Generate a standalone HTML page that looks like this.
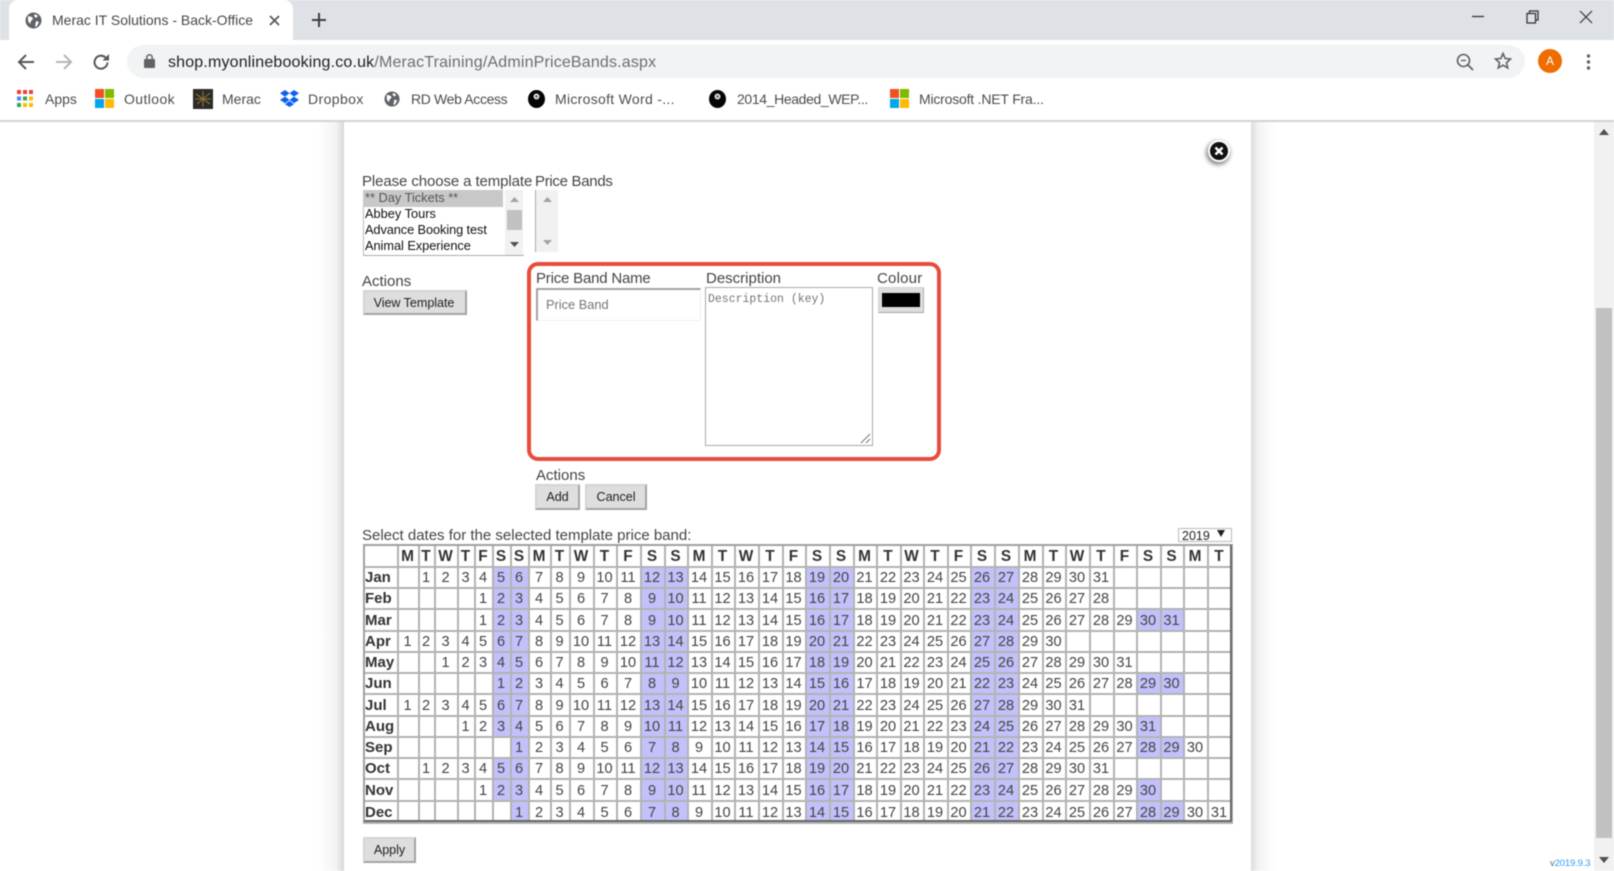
<!DOCTYPE html>
<html><head><meta charset="utf-8"><title>Merac IT Solutions - Back-Office</title>
<style>
html,body{margin:0;padding:0;width:1614px;height:871px;overflow:hidden;background:#fff}
#r{position:absolute;left:0;top:0;width:1614px;height:871px;overflow:hidden;font-family:"Liberation Sans",sans-serif;filter:blur(.45px);background:#fff}
.a{position:absolute;white-space:nowrap}
.bm{position:absolute;top:90px;font-size:14px;line-height:18px;color:#4a4d51;white-space:nowrap}
svg{position:absolute;overflow:visible}
.lab{position:absolute;font-size:15px;line-height:18px;color:#444;white-space:nowrap}
.btn{position:absolute;box-sizing:border-box;background:#dedede;border:2px solid;border-color:#d4d4d4 #a3a3a3 #a3a3a3 #d4d4d4;font-size:12.6px;color:#222;text-align:center;white-space:nowrap;letter-spacing:-.05px}
table{position:absolute;left:363px;top:544px;width:868px;table-layout:fixed;border-collapse:collapse;font-size:14.6px;color:#444;background:#fff}
td,th{padding:1px 2px 0 0;border:2px solid #b3b3b3;text-align:center;overflow:hidden;white-space:nowrap;line-height:16px}
th{color:#333;font-size:15.4px}
th.m{text-align:left;padding-left:0;padding-right:0;font-size:15px}
td.w{background:#c3c1fb}
</style></head><body><div id="r">

<!-- tab strip -->
<div class="a" style="left:0;top:0;width:1614px;height:40px;background:#dee1e6"></div>
<div class="a" style="left:9px;top:0;width:284px;height:40px;background:#fff;border-radius:9px 9px 0 0"></div>
<svg style="left:25px;top:12px" width="17" height="17" viewBox="0 0 17 17"><circle cx="8.5" cy="8.5" r="8" fill="#5f6368"/><path d="M3 4l4 1 1 2-2 2-1 3-2-3zM10 2l3 2-2 2-2-2zM11 9l3 1-2 4-2 1z" fill="#fff"/></svg>
<div class="a" style="left:52px;top:11px;font-size:14px;line-height:18px;color:#45484c">Merac IT Solutions - Back-Office</div>
<svg style="left:269px;top:15px" width="11" height="11" viewBox="0 0 11 11"><path d="M1 1l9 9M10 1l-9 9" stroke="#55585c" stroke-width="1.8"/></svg>
<svg style="left:312px;top:13px" width="14" height="14" viewBox="0 0 14 14"><path d="M7 0v14M0 7h14" stroke="#3c4043" stroke-width="2"/></svg>
<svg style="left:1471px;top:15px" width="14" height="3" viewBox="0 0 14 3"><path d="M1 1.5h12" stroke="#333" stroke-width="1.3"/></svg>
<svg style="left:1526px;top:10px" width="14" height="14" viewBox="0 0 14 14"><path d="M1 3.5h8.5v9.5H1zM3.5 3.5V1H12v9H9.5" fill="none" stroke="#333" stroke-width="1.3"/></svg>
<svg style="left:1579px;top:10px" width="14" height="14" viewBox="0 0 14 14"><path d="M1 1l12 12M13 1L1 13" stroke="#333" stroke-width="1.2"/></svg>

<!-- toolbar -->
<div class="a" style="left:127px;top:45px;width:1398px;height:33px;background:#f1f3f4;border-radius:17px"></div>
<svg style="left:17px;top:53px" width="18" height="18" viewBox="0 0 18 18"><path d="M17 9H2M9 2L2 9l7 7" fill="none" stroke="#55585c" stroke-width="2"/></svg>
<svg style="left:55px;top:53px" width="18" height="18" viewBox="0 0 18 18"><path d="M1 9h15M9 2l7 7-7 7" fill="none" stroke="#b4b6b9" stroke-width="2"/></svg>
<svg style="left:92px;top:53px" width="18" height="18" viewBox="0 0 18 18"><path d="M15.5 9.5A6.5 6.5 0 1 1 13.5 4.5" fill="none" stroke="#55585c" stroke-width="2"/><path d="M10.5 7.5h6.5V1z" fill="#55585c"/></svg>
<svg style="left:144px;top:54px" width="11" height="14" viewBox="0 0 11 14"><rect x="0" y="5" width="11" height="9" rx="1" fill="#5f6368"/><path d="M2.8 5.5V3.5a2.7 2.7 0 0 1 5.4 0v2" fill="none" stroke="#5f6368" stroke-width="1.5"/></svg>
<div class="a" style="left:168px;top:53px;font-size:16px;line-height:20px;color:#202124;letter-spacing:.17px">shop.myonlinebooking.co.uk<span style="color:#6b6f73">/MeracTraining/AdminPriceBands.aspx</span></div>
<svg style="left:1456px;top:53px" width="18" height="18" viewBox="0 0 18 18"><circle cx="7.5" cy="7.5" r="6" fill="none" stroke="#5f6368" stroke-width="1.6"/><path d="M12 12l5 5" stroke="#5f6368" stroke-width="1.8"/><path d="M5 7.5h5" stroke="#5f6368" stroke-width="1.4"/></svg>
<svg style="left:1494px;top:52px" width="18" height="18" viewBox="0 0 18 18"><path d="M9 1.5l2.2 5 5.3.5-4 3.6 1.200 5.300L9 13.200 4.300 15.900l1.200-5.300-4-3.600 5.300-.5z" fill="none" stroke="#5f6368" stroke-width="1.600"/></svg>
<div class="a" style="left:1538px;top:49px;width:24px;height:24px;border-radius:50%;background:#ef6c00;color:#fff;font-size:12px;line-height:24px;text-align:center">A</div>
<svg style="left:1586px;top:54px" width="5" height="16" viewBox="0 0 5 16"><circle cx="2.500" cy="2" r="1.700" fill="#5f6368"/><circle cx="2.500" cy="8" r="1.700" fill="#5f6368"/><circle cx="2.500" cy="14" r="1.700" fill="#5f6368"/></svg>

<!-- bookmarks -->
<svg style="left:17px;top:90px" width="16" height="17" viewBox="0 0 16 17"><g><rect x="0" y="0" width="4" height="4" fill="#ea4335"/><rect x="6" y="0" width="4" height="4" fill="#ea4335"/><rect x="12" y="0" width="4" height="4" fill="#ea4335"/><rect x="0" y="6.500" width="4" height="4" fill="#4d8bf0"/><rect x="6" y="6.500" width="4" height="4" fill="#34a853"/><rect x="12" y="6.500" width="4" height="4" fill="#fbbc05"/><rect x="0" y="13" width="4" height="4" fill="#34a853"/><rect x="6" y="13" width="4" height="4" fill="#fbbc05"/><rect x="12" y="13" width="4" height="4" fill="#fbbc05"/></g></svg>
<div class="bm" style="left:45px">Apps</div>
<svg style="left:95px;top:89px" width="19" height="19" viewBox="0 0 19 19"><rect width="9" height="9" fill="#f25022"/><rect x="10" width="9" height="9" fill="#7fba00"/><rect y="10" width="9" height="9" fill="#00a4ef"/><rect x="10" y="10" width="9" height="9" fill="#ffb900"/></svg>
<div class="bm" style="left:124px;letter-spacing:.4px">Outlook</div>
<svg style="left:193px;top:89px" width="20" height="20" viewBox="0 0 20 20"><rect width="20" height="20" fill="#2b2a28"/><path d="M10 2v16M3 5l14 10M17 4L4 15M2 10h16" stroke="#8c7430" stroke-width="1.100"/></svg>
<div class="bm" style="left:222px">Merac</div>
<svg style="left:280px;top:90px" width="19" height="17" viewBox="0 0 19 17"><path d="M5 0L0 3.300l5 3.300 4.500-3.300zM14 0L9.500 3.300 14 6.600l5-3.300zM0 9.900l5 3.300 4.500-3.300L5 6.600zM14 6.600L9.500 9.900l4.500 3.300 5-3.300zM5 14.200l4.500 2.800 4.500-2.800-4.500-3.300z" fill="#0d62f0"/></svg>
<div class="bm" style="left:308px;letter-spacing:.4px">Dropbox</div>
<svg style="left:384px;top:91px" width="16" height="16" viewBox="0 0 17 17"><circle cx="8.500" cy="8.500" r="8" fill="#5f6368"/><path d="M3 4l4 1 1 2-2 2-1 3-2-3zM10 2l3 2-2 2-2-2zM11 9l3 1-2 4-2 1z" fill="#fff"/></svg>
<div class="bm" style="left:411px;letter-spacing:-.35px">RD Web Access</div>
<svg style="left:528px;top:90px" width="17" height="18" viewBox="0 0 17 18"><ellipse cx="8.500" cy="9" rx="8.500" ry="9" fill="#050505"/><circle cx="8.500" cy="6.500" r="3" fill="#ddd"/><circle cx="8.500" cy="6.500" r="1.200" fill="#6a4a9c"/></svg>
<div class="bm" style="left:555px;letter-spacing:.3px">Microsoft Word -...</div>
<svg style="left:709px;top:90px" width="17" height="18" viewBox="0 0 17 18"><ellipse cx="8.500" cy="9" rx="8.500" ry="9" fill="#050505"/><circle cx="8.500" cy="6.500" r="3" fill="#ddd"/><circle cx="8.500" cy="6.500" r="1.200" fill="#6a4a9c"/></svg>
<div class="bm" style="left:737px;letter-spacing:-.37px">2014_Headed_WEP...</div>
<svg style="left:890px;top:89px" width="19" height="19" viewBox="0 0 19 19"><rect width="9" height="9" fill="#f25022"/><rect x="10" width="9" height="9" fill="#7fba00"/><rect y="10" width="9" height="9" fill="#00a4ef"/><rect x="10" y="10" width="9" height="9" fill="#ffb900"/></svg>
<div class="bm" style="left:919px;letter-spacing:-.2px">Microsoft .NET Fra...</div>
<div class="a" style="left:0;top:120px;width:1614px;height:2px;background:#d2d2d2"></div>

<!-- panel shadows -->
<div class="a" style="left:318px;top:122px;width:26px;height:749px;background:linear-gradient(to right,#fff,#f3f3f3 70%,#d8d8d8)"></div>
<div class="a" style="left:1251px;top:122px;width:24px;height:749px;background:linear-gradient(to right,#dcdcdc,#f3f3f3 30%,#fff)"></div>

<!-- page scrollbar -->
<div class="a" style="left:1594px;top:122px;width:20px;height:749px;background:#f1f1f1"></div>
<div class="a" style="left:1596px;top:308px;width:16px;height:530px;background:#c1c1c1"></div>
<svg style="left:1599px;top:129px" width="10" height="6" viewBox="0 0 10 6"><path d="M5 0l5 6H0z" fill="#505050"/></svg>
<svg style="left:1599px;top:857px" width="10" height="6" viewBox="0 0 10 6"><path d="M5 6l5-6H0z" fill="#505050"/></svg>

<!-- close -->
<div class="a" style="left:1208px;top:140px;width:22px;height:22px;border-radius:50%;background:#fff;box-shadow:-1px 2px 4px 1px rgba(0,0,0,.45)"></div>
<div class="a" style="left:1210px;top:142px;width:18px;height:18px;border-radius:50%;background:#111"></div>
<svg style="left:1214px;top:146px" width="10" height="10" viewBox="0 0 10 10"><path d="M1.500 1.500l7 7M8.500 1.500l-7 7" stroke="#fff" stroke-width="2.500"/></svg>

<!-- template -->
<div class="lab" style="left:362px;top:173px;letter-spacing:-.1px">Please choose a template</div>
<div class="lab" style="left:535px;top:173px;letter-spacing:-.3px">Price Bands</div>
<div class="a" style="left:363px;top:190px;width:160px;height:65px;border-bottom:1.500px solid #aaa;border-left:1px solid #bbb;box-sizing:content-box"></div>
<div class="a" style="left:363px;top:190px;width:140px;height:16.500px;background:#c8c8c8"></div>
<div class="a" style="left:365px;top:190px;font-size:12.800px;line-height:16px;color:#555">** Day Tickets **</div>
<div class="a" style="left:365px;top:206px;font-size:12.800px;line-height:16px;color:#111">Abbey Tours</div>
<div class="a" style="left:365px;top:222px;font-size:12.800px;line-height:16px;color:#111;letter-spacing:-.1px">Advance Booking test</div>
<div class="a" style="left:365px;top:238px;font-size:12.800px;line-height:16px;color:#111;letter-spacing:-.05px">Animal Experience</div>
<div class="a" style="left:505px;top:190px;width:18px;height:65px;background:#f1f1f1"></div>
<div class="a" style="left:507px;top:210px;width:15px;height:20px;background:#c1c1c1"></div>
<svg style="left:510px;top:197px" width="9" height="5" viewBox="0 0 9 5"><path d="M4.500 0l4.500 5H0z" fill="#a3a3a3"/></svg>
<svg style="left:510px;top:242px" width="9" height="5" viewBox="0 0 9 5"><path d="M4.500 5L9 0H0z" fill="#505050"/></svg>

<div class="a" style="left:535px;top:190px;width:23px;height:62px;background:#f1f1f1;border-left:1.500px solid #aaa;box-sizing:border-box"></div>
<svg style="left:543px;top:197px" width="9" height="5" viewBox="0 0 9 5"><path d="M4.500 0l4.500 5H0z" fill="#a3a3a3"/></svg>
<svg style="left:543px;top:240px" width="9" height="5" viewBox="0 0 9 5"><path d="M4.500 5L9 0H0z" fill="#a3a3a3"/></svg>

<div class="lab" style="left:362px;top:273px">Actions</div>
<div class="btn" style="left:363px;top:290px;width:104px;height:25px;line-height:23px;padding-right:2px">View Template</div>

<!-- red box -->
<div class="a" style="left:527px;top:262px;width:414px;height:199px;box-sizing:border-box;border:4px solid #e74c3c;border-radius:11px"></div>
<div class="lab" style="left:536px;top:270px;letter-spacing:-.2px">Price Band Name</div>
<div class="a" style="left:536px;top:288px;width:165px;height:33px;box-sizing:border-box;border:2px solid;border-color:#a3a3a3 #efefef #efefef #a3a3a3;border-bottom-width:1px;border-right-width:1px"></div>
<div class="a" style="left:546px;top:296px;font-size:12.800px;line-height:17px;color:#757575">Price Band</div>
<div class="lab" style="left:706px;top:270px">Description</div>
<div class="a" style="left:705px;top:287px;width:168px;height:159px;box-sizing:border-box;border:1.500px solid #a9a9a9;background:#fff"></div>
<div class="a" style="left:708px;top:292px;font-family:'Liberation Mono',monospace;font-size:11.500px;line-height:15px;color:#757575">Description (key)</div>
<svg style="left:860px;top:433px" width="11" height="11" viewBox="0 0 11 11"><path d="M1 10l9-9M6 10l4-4" stroke="#777" stroke-width="1"/></svg>
<div class="lab" style="left:877px;top:270px;letter-spacing:.2px">Colour</div>
<div class="a" style="left:878px;top:287px;width:46px;height:26px;box-sizing:border-box;background:#dedede;border:1.500px solid;border-color:#d4d4d4 #b0b0b0 #a3a3a3 #d4d4d4"></div>
<div class="a" style="left:882px;top:293px;width:38px;height:14px;background:#000"></div>

<div class="lab" style="left:536px;top:467px">Actions</div>
<div class="btn" style="left:535px;top:484px;width:45px;height:26px;line-height:23px">Add</div>
<div class="btn" style="left:585px;top:484px;width:62px;height:26px;line-height:23px">Cancel</div>

<!-- calendar -->
<div class="lab" style="left:362px;top:527px">Select dates for the selected template price band:</div>
<div class="a" style="left:1178px;top:528px;width:54px;height:14px;box-sizing:border-box;border:1px solid #bbb;background:#fff"></div>
<div class="a" style="left:1182px;top:529px;font-size:12.500px;line-height:15px;color:#222">2019</div>
<svg style="left:1217px;top:530px" width="8" height="7" viewBox="0 0 8 7"><path d="M4 7l4-7H0z" fill="#222"/></svg>

<table>
<colgroup><col style="width:34px"><col style="width:21px"><col style="width:16px"><col style="width:23px"><col style="width:17px"><col style="width:18px"><col style="width:18px"><col style="width:18px"><col style="width:22px"><col style="width:19px"><col style="width:24px"><col style="width:23px"><col style="width:24px"><col style="width:24px"><col style="width:23px"><col style="width:24px"><col style="width:23px"><col style="width:24px"><col style="width:24px"><col style="width:23px"><col style="width:24px"><col style="width:24px"><col style="width:23px"><col style="width:24px"><col style="width:23px"><col style="width:24px"><col style="width:23px"><col style="width:24px"><col style="width:24px"><col style="width:24px"><col style="width:23px"><col style="width:24px"><col style="width:24px"><col style="width:23px"><col style="width:24px"><col style="width:23px"><col style="width:24px"><col style="width:24px"></colgroup>
<tr style="height:22px"><th></th><th>M</th><th>T</th><th>W</th><th>T</th><th>F</th><th>S</th><th>S</th><th>M</th><th>T</th><th>W</th><th>T</th><th>F</th><th>S</th><th>S</th><th>M</th><th>T</th><th>W</th><th>T</th><th>F</th><th>S</th><th>S</th><th>M</th><th>T</th><th>W</th><th>T</th><th>F</th><th>S</th><th>S</th><th>M</th><th>T</th><th>W</th><th>T</th><th>F</th><th>S</th><th>S</th><th>M</th><th>T</th></tr>
<tr style="height:21px"><th class="m">Jan</th><td></td><td>1</td><td>2</td><td>3</td><td>4</td><td class="w">5</td><td class="w">6</td><td>7</td><td>8</td><td>9</td><td>10</td><td>11</td><td class="w">12</td><td class="w">13</td><td>14</td><td>15</td><td>16</td><td>17</td><td>18</td><td class="w">19</td><td class="w">20</td><td>21</td><td>22</td><td>23</td><td>24</td><td>25</td><td class="w">26</td><td class="w">27</td><td>28</td><td>29</td><td>30</td><td>31</td><td></td><td></td><td></td><td></td><td></td></tr>
<tr style="height:21px"><th class="m">Feb</th><td></td><td></td><td></td><td></td><td>1</td><td class="w">2</td><td class="w">3</td><td>4</td><td>5</td><td>6</td><td>7</td><td>8</td><td class="w">9</td><td class="w">10</td><td>11</td><td>12</td><td>13</td><td>14</td><td>15</td><td class="w">16</td><td class="w">17</td><td>18</td><td>19</td><td>20</td><td>21</td><td>22</td><td class="w">23</td><td class="w">24</td><td>25</td><td>26</td><td>27</td><td>28</td><td></td><td></td><td></td><td></td><td></td></tr>
<tr style="height:22px"><th class="m">Mar</th><td></td><td></td><td></td><td></td><td>1</td><td class="w">2</td><td class="w">3</td><td>4</td><td>5</td><td>6</td><td>7</td><td>8</td><td class="w">9</td><td class="w">10</td><td>11</td><td>12</td><td>13</td><td>14</td><td>15</td><td class="w">16</td><td class="w">17</td><td>18</td><td>19</td><td>20</td><td>21</td><td>22</td><td class="w">23</td><td class="w">24</td><td>25</td><td>26</td><td>27</td><td>28</td><td>29</td><td class="w">30</td><td class="w">31</td><td></td><td></td></tr>
<tr style="height:21px"><th class="m">Apr</th><td>1</td><td>2</td><td>3</td><td>4</td><td>5</td><td class="w">6</td><td class="w">7</td><td>8</td><td>9</td><td>10</td><td>11</td><td>12</td><td class="w">13</td><td class="w">14</td><td>15</td><td>16</td><td>17</td><td>18</td><td>19</td><td class="w">20</td><td class="w">21</td><td>22</td><td>23</td><td>24</td><td>25</td><td>26</td><td class="w">27</td><td class="w">28</td><td>29</td><td>30</td><td></td><td></td><td></td><td></td><td></td><td></td><td></td></tr>
<tr style="height:21px"><th class="m">May</th><td></td><td></td><td>1</td><td>2</td><td>3</td><td class="w">4</td><td class="w">5</td><td>6</td><td>7</td><td>8</td><td>9</td><td>10</td><td class="w">11</td><td class="w">12</td><td>13</td><td>14</td><td>15</td><td>16</td><td>17</td><td class="w">18</td><td class="w">19</td><td>20</td><td>21</td><td>22</td><td>23</td><td>24</td><td class="w">25</td><td class="w">26</td><td>27</td><td>28</td><td>29</td><td>30</td><td>31</td><td></td><td></td><td></td><td></td></tr>
<tr style="height:21px"><th class="m">Jun</th><td></td><td></td><td></td><td></td><td></td><td class="w">1</td><td class="w">2</td><td>3</td><td>4</td><td>5</td><td>6</td><td>7</td><td class="w">8</td><td class="w">9</td><td>10</td><td>11</td><td>12</td><td>13</td><td>14</td><td class="w">15</td><td class="w">16</td><td>17</td><td>18</td><td>19</td><td>20</td><td>21</td><td class="w">22</td><td class="w">23</td><td>24</td><td>25</td><td>26</td><td>27</td><td>28</td><td class="w">29</td><td class="w">30</td><td></td><td></td></tr>
<tr style="height:22px"><th class="m">Jul</th><td>1</td><td>2</td><td>3</td><td>4</td><td>5</td><td class="w">6</td><td class="w">7</td><td>8</td><td>9</td><td>10</td><td>11</td><td>12</td><td class="w">13</td><td class="w">14</td><td>15</td><td>16</td><td>17</td><td>18</td><td>19</td><td class="w">20</td><td class="w">21</td><td>22</td><td>23</td><td>24</td><td>25</td><td>26</td><td class="w">27</td><td class="w">28</td><td>29</td><td>30</td><td>31</td><td></td><td></td><td></td><td></td><td></td><td></td></tr>
<tr style="height:21px"><th class="m">Aug</th><td></td><td></td><td></td><td>1</td><td>2</td><td class="w">3</td><td class="w">4</td><td>5</td><td>6</td><td>7</td><td>8</td><td>9</td><td class="w">10</td><td class="w">11</td><td>12</td><td>13</td><td>14</td><td>15</td><td>16</td><td class="w">17</td><td class="w">18</td><td>19</td><td>20</td><td>21</td><td>22</td><td>23</td><td class="w">24</td><td class="w">25</td><td>26</td><td>27</td><td>28</td><td>29</td><td>30</td><td class="w">31</td><td></td><td></td><td></td></tr>
<tr style="height:21px"><th class="m">Sep</th><td></td><td></td><td></td><td></td><td></td><td></td><td class="w">1</td><td>2</td><td>3</td><td>4</td><td>5</td><td>6</td><td class="w">7</td><td class="w">8</td><td>9</td><td>10</td><td>11</td><td>12</td><td>13</td><td class="w">14</td><td class="w">15</td><td>16</td><td>17</td><td>18</td><td>19</td><td>20</td><td class="w">21</td><td class="w">22</td><td>23</td><td>24</td><td>25</td><td>26</td><td>27</td><td class="w">28</td><td class="w">29</td><td>30</td><td></td></tr>
<tr style="height:21px"><th class="m">Oct</th><td></td><td>1</td><td>2</td><td>3</td><td>4</td><td class="w">5</td><td class="w">6</td><td>7</td><td>8</td><td>9</td><td>10</td><td>11</td><td class="w">12</td><td class="w">13</td><td>14</td><td>15</td><td>16</td><td>17</td><td>18</td><td class="w">19</td><td class="w">20</td><td>21</td><td>22</td><td>23</td><td>24</td><td>25</td><td class="w">26</td><td class="w">27</td><td>28</td><td>29</td><td>30</td><td>31</td><td></td><td></td><td></td><td></td><td></td></tr>
<tr style="height:22px"><th class="m">Nov</th><td></td><td></td><td></td><td></td><td>1</td><td class="w">2</td><td class="w">3</td><td>4</td><td>5</td><td>6</td><td>7</td><td>8</td><td class="w">9</td><td class="w">10</td><td>11</td><td>12</td><td>13</td><td>14</td><td>15</td><td class="w">16</td><td class="w">17</td><td>18</td><td>19</td><td>20</td><td>21</td><td>22</td><td class="w">23</td><td class="w">24</td><td>25</td><td>26</td><td>27</td><td>28</td><td>29</td><td class="w">30</td><td></td><td></td><td></td></tr>
<tr style="height:22px"><th class="m">Dec</th><td></td><td></td><td></td><td></td><td></td><td></td><td class="w">1</td><td>2</td><td>3</td><td>4</td><td>5</td><td>6</td><td class="w">7</td><td class="w">8</td><td>9</td><td>10</td><td>11</td><td>12</td><td>13</td><td class="w">14</td><td class="w">15</td><td>16</td><td>17</td><td>18</td><td>19</td><td>20</td><td class="w">21</td><td class="w">22</td><td>23</td><td>24</td><td>25</td><td>26</td><td>27</td><td class="w">28</td><td class="w">29</td><td>30</td><td>31</td></tr>
</table>
<div class="a" style="left:363px;top:544px;width:869px;height:278px;box-sizing:border-box;border:2px solid;border-color:#a0a0a0 #666 #666 #a0a0a0"></div>

<div class="btn" style="left:363px;top:837px;width:53px;height:26px;line-height:23px">Apply</div>
<div class="a" style="left:1550px;top:858px;font-size:9.500px;line-height:11px;color:#666;letter-spacing:-.15px">v<span style="color:#2f9cf4">2019.9.3</span></div>

</div></body></html>
